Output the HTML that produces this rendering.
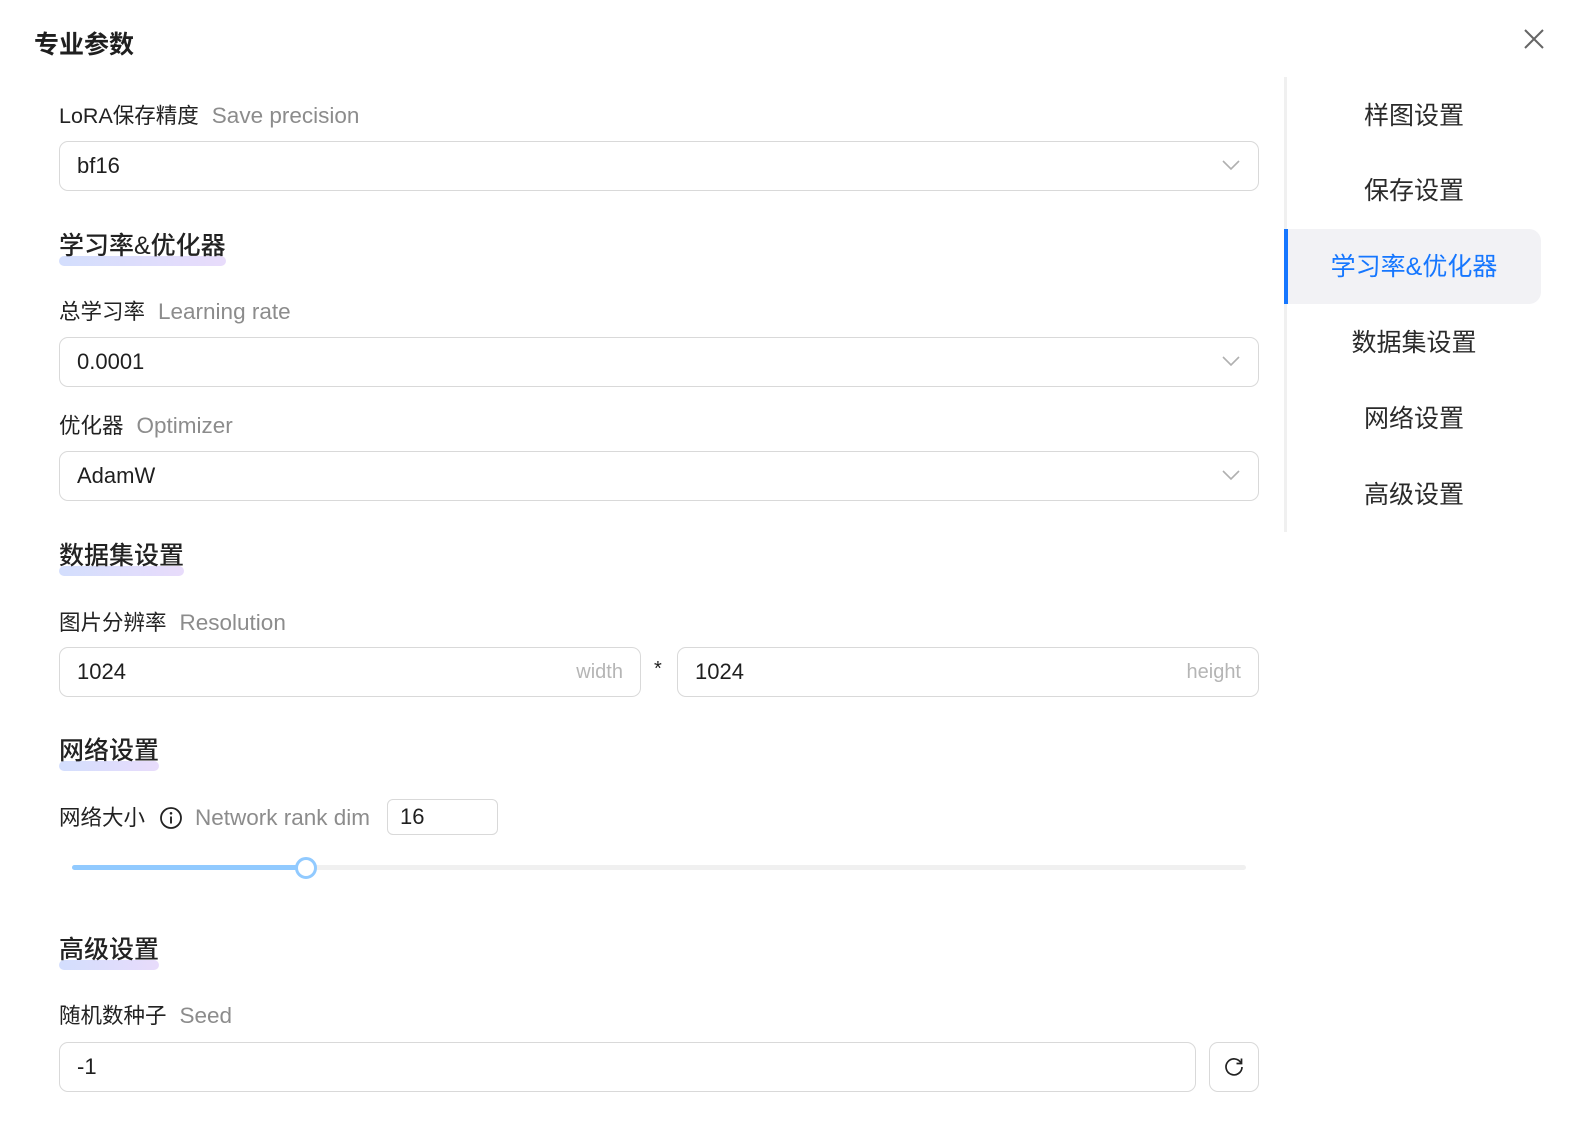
<!DOCTYPE html>
<html><head><meta charset="utf-8"><style>
*{margin:0;padding:0;box-sizing:border-box}
body{width:1584px;height:1140px;background:#fff;position:relative;overflow:hidden;font-family:"Liberation Sans","Noto Sans CJK SC",sans-serif;color:#1f1f1f}
.a{position:absolute;white-space:nowrap}
.title{left:34px;top:28px;font-size:25px;font-weight:bold;line-height:34px}
.lbl{left:59px;font-size:21.5px;line-height:30px;color:#222}
.lbl span{color:#8c8c8c;margin-left:13px;font-size:22.5px}
.inp{border:1px solid #d9d9d9;border-radius:9px;height:50px;font-size:22px;line-height:48px;padding-left:17px;color:#1f1f1f}
.chev{position:absolute;right:18px;top:17px}
.sec{left:59px;font-size:25px;font-weight:500;line-height:34px;color:#222}
.sec:after{content:"";position:absolute;left:0;right:0;bottom:-3px;height:10px;border-radius:5px;background:linear-gradient(90deg,#d3defd,#e8dcfb);z-index:-1}
.nav{left:1286px;width:256px;text-align:center;font-size:25px;line-height:34px;color:#2a2a2a}
.ph{position:absolute;right:17px;top:0;color:#b5b5b5;font-size:20px}
</style></head><body>
<div class="a title">专业参数</div>
<svg class="a" style="left:1522px;top:27px" width="24" height="24" viewBox="0 0 24 24"><path d="M3 3L21 21M21 3L3 21" stroke="#666" stroke-width="2" fill="none"/></svg>

<div class="a lbl" style="top:101px">LoRA保存精度<span>Save precision</span></div>
<div class="a inp" style="left:59px;top:141px;width:1200px">bf16<svg class="chev" width="18" height="12" viewBox="0 0 18 12"><path d="M1 2L9 10L17 2" stroke="#b0b0b0" stroke-width="1.6" fill="none"/></svg></div>

<div class="a sec" style="top:229px">学习率&amp;优化器</div>

<div class="a lbl" style="top:297px">总学习率<span>Learning rate</span></div>
<div class="a inp" style="left:59px;top:337px;width:1200px">0.0001<svg class="chev" width="18" height="12" viewBox="0 0 18 12"><path d="M1 2L9 10L17 2" stroke="#b0b0b0" stroke-width="1.6" fill="none"/></svg></div>

<div class="a lbl" style="top:411px">优化器<span>Optimizer</span></div>
<div class="a inp" style="left:59px;top:451px;width:1200px">AdamW<svg class="chev" width="18" height="12" viewBox="0 0 18 12"><path d="M1 2L9 10L17 2" stroke="#b0b0b0" stroke-width="1.6" fill="none"/></svg></div>

<div class="a sec" style="top:539px">数据集设置</div>

<div class="a lbl" style="top:608px">图片分辨率<span>Resolution</span></div>
<div class="a inp" style="left:59px;top:647px;width:582px">1024<span class="ph">width</span></div>
<div class="a" style="left:654px;top:658px;font-size:20px">*</div>
<div class="a inp" style="left:677px;top:647px;width:582px">1024<span class="ph">height</span></div>

<div class="a sec" style="top:734px">网络设置</div>

<div class="a lbl" style="top:803px">网络大小</div>
<svg class="a" style="left:159px;top:806px" width="24" height="24" viewBox="0 0 24 24"><circle cx="12" cy="12" r="10" stroke="#222" stroke-width="1.8" fill="none"/><circle cx="12" cy="7.3" r="1.3" fill="#222"/><path d="M12 10.5V17.5" stroke="#222" stroke-width="1.9"/></svg>
<div class="a" style="left:195px;top:803px;font-size:22.5px;line-height:30px;color:#8c8c8c">Network rank dim</div>
<div class="a inp" style="left:387px;top:799px;width:111px;height:36px;line-height:34px;padding-left:12px;border-radius:6px">16</div>
<div class="a" style="left:72px;top:865px;width:1174px;height:5px;border-radius:3px;background:#f0f0f0"></div>
<div class="a" style="left:72px;top:865px;width:234px;height:5px;border-radius:3px;background:#91caff"></div>
<div class="a" style="left:295px;top:857px;width:22px;height:22px;border-radius:50%;background:#fff;border:3px solid #91caff"></div>

<div class="a sec" style="top:933px">高级设置</div>

<div class="a lbl" style="top:1001px">随机数种子<span>Seed</span></div>
<div class="a inp" style="left:59px;top:1042px;width:1137px">-1</div>
<div class="a inp" style="left:1209px;top:1042px;width:50px;padding:0"><svg style="position:absolute;left:12px;top:12px" width="24" height="24" viewBox="0 0 24 24"><path d="M19 8A8 8 0 1 0 20 12" stroke="#222" stroke-width="1.7" fill="none"/><path d="M19.5 3.5V8.5H14.5" stroke="#222" stroke-width="1.7" fill="none"/></svg></div>

<div class="a" style="left:1284px;top:77px;width:3px;height:455px;background:#f0f0f0"></div>
<div class="a" style="left:1284px;top:229px;width:257px;height:75px;background:#f2f2f5;border-radius:0 12px 12px 0"></div>
<div class="a" style="left:1284px;top:229px;width:4px;height:75px;background:#1677ff"></div>
<div class="a nav" style="top:99px">样图设置</div>
<div class="a nav" style="top:174px">保存设置</div>
<div class="a nav" style="top:250px;color:#1677ff">学习率&amp;优化器</div>
<div class="a nav" style="top:326px">数据集设置</div>
<div class="a nav" style="top:402px">网络设置</div>
<div class="a nav" style="top:478px">高级设置</div>
</body></html>
